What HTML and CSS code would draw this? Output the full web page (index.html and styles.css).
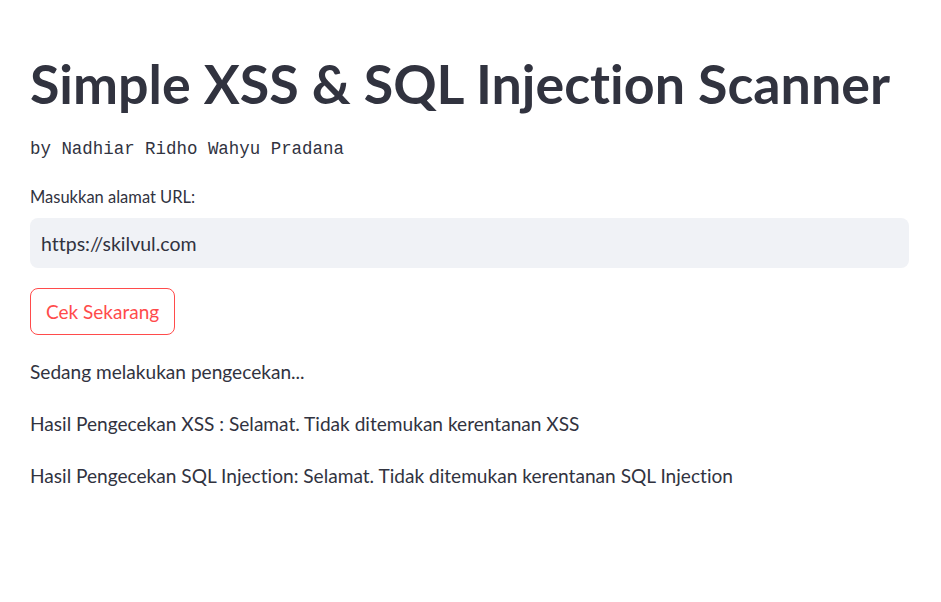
FILE: index.html
```html
<!DOCTYPE html>
<html>
<head>
<meta charset="utf-8">
<link rel="stylesheet" href="styles.css">
</head>
<body>
<main class="main">
  <h1 class="title">Simple XSS &amp; SQL Injection Scanner</h1>
  <p class="author">by Nadhiar Ridho Wahyu Pradana</p>
  <label class="label">Masukkan alamat URL:</label>
  <div class="input">https://skilvul.com</div>
  <button class="btn">Cek Sekarang</button>
  <p class="text">Sedang melakukan pengecekan...</p>
  <p class="text">Hasil Pengecekan XSS : Selamat. Tidak ditemukan kerentanan XSS</p>
  <p class="text">Hasil Pengecekan SQL Injection: Selamat. Tidak ditemukan kerentanan SQL Injection</p>
</main>
</body>
</html>
```
FILE: styles.css
```css
* { box-sizing: border-box; }
html, body { margin: 0; padding: 0; background: #ffffff; }
body {
  font-family: Lato, "Noto Sans", sans-serif;
  font-variant-ligatures: none;
  color: #31333f;
}
.main {
  width: 879px;
  margin-left: 30px;
  padding-top: 50px;
  display: flex;
  flex-direction: column;
  align-items: flex-start;
}
.title {
  margin: 0;
  font-size: 53.75px;
  font-weight: 700;
  line-height: 66px;
  white-space: nowrap;
}
.author {
  margin: 21px 0 0 0;
  font-family: "Liberation Mono", "DejaVu Sans Mono", monospace;
  font-size: 17.45px;
  line-height: 24px;
}
.label {
  margin-top: 26px;
  font-size: 16.5px;
  line-height: 20px;
}
.input {
  margin-top: 11px;
  width: 879px;
  height: 50px;
  background: #f0f2f6;
  border-radius: 8px;
  padding: 0 11px;
  display: flex;
  align-items: center;
  font-size: 19.5px;
}
.btn {
  margin-top: 20px;
  height: 47px;
  padding: 0 15px;
  background: #fff;
  border: 1px solid #ff4b4b;
  border-radius: 8px;
  color: #ff4b4b;
  font-family: Lato, "Noto Sans", sans-serif;
  font-size: 19px;
}
.text {
  margin: 0;
  font-size: 19.1px;
  line-height: 26px;
}
.btn + .text { margin-top: 24px; }
.text + .text { margin-top: 26px; }
```
